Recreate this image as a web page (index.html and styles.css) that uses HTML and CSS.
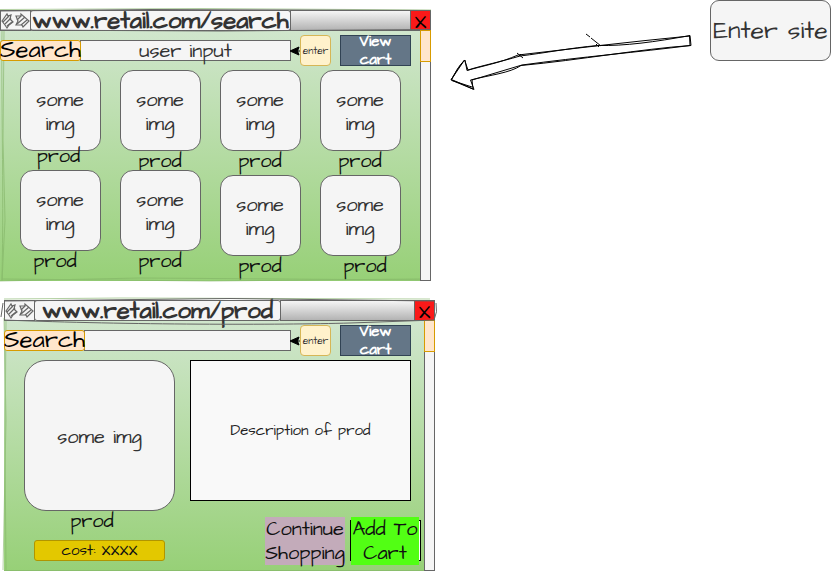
FILE: index.html
```html
<!DOCTYPE html>
<html lang="en">
<head>
<meta charset="utf-8">
<title>Retail wireframe</title>
<link rel="stylesheet" href="styles.css">
</head>
<body>
<main class="canvas">
  <svg width="0" height="0" class="defs">
    <defs>
      <symbol id="nav" viewBox="0 0 30 20">
        <g fill="none" stroke="#666" stroke-width="1.2">
          <path d="M1 10 6 3 7 5 10 4 9 8 12 11 8 14 6 17 4 14ZM15 5 20 5 20 3 28 10 22 16 21 14 15 14 17 10Z"/>
          <path d="M2 11 8 5M4 13 10 7M6 15 11 11M16 9 20 5M16 13 24 6M20 14 26 9"/>
        </g>
      </symbol>
      <symbol id="pointer" viewBox="0 0 10 12">
        <path d="M0 6 9 2 7.500 6 9 10Z" fill="#000" stroke="#000"/><path d="M6 6H10" stroke="#000"/>
      </symbol>
    </defs>
  </svg>

  <section class="window search-window">
    <header class="titlebar">
      <div class="nav"><svg width="30" height="20"><use href="#nav"/></svg></div>
      <div class="url"><span>www.retail.com/search</span></div>
      <div class="track"></div>
      <div class="close">X</div>
    </header>
    <div class="body">
      <div class="content">
        <div class="searchbar">
          <div class="label">Search</div>
          <div class="input">user input</div>
          <svg class="pointer" width="10" height="12"><use href="#pointer"/></svg>
          <div class="enter">enter</div>
          <div class="cart">View<br>cart</div>
        </div>
        <div class="products">
          <div class="product"><div class="thumb">some<br>img</div><div class="name a">prod</div></div>
          <div class="product"><div class="thumb">some<br>img</div><div class="name">prod</div></div>
          <div class="product"><div class="thumb">some<br>img</div><div class="name">prod</div></div>
          <div class="product"><div class="thumb">some<br>img</div><div class="name">prod</div></div>
          <div class="product"><div class="thumb">some<br>img</div><div class="name b">prod</div></div>
          <div class="product"><div class="thumb">some<br>img</div><div class="name">prod</div></div>
          <div class="product low"><div class="thumb">some<br>img</div><div class="name">prod</div></div>
          <div class="product low"><div class="thumb">some<br>img</div><div class="name c">prod</div></div>
        </div>
      </div>
      <div class="scrollbar"><div class="grip"></div></div>
    </div>
  </section>

  <section class="window prod-window">
    <header class="titlebar">
      <div class="nav"><svg width="30" height="20"><use href="#nav"/></svg></div>
      <div class="url"><span>www.retail.com/prod</span></div>
      <div class="track"></div>
      <div class="close">X</div>
    </header>
    <div class="body">
      <div class="content">
        <div class="searchbar">
          <div class="label">Search</div>
          <div class="input"></div>
          <svg class="pointer" width="10" height="12"><use href="#pointer"/></svg>
          <div class="enter">enter</div>
          <div class="cart">View<br>cart</div>
        </div>
        <div class="detail">
          <div class="summary">
            <div class="photo">some img</div>
            <div class="photo-name">prod</div>
            <div class="cost">cost: XXXX</div>
          </div>
          <div class="info">
            <div class="description">Description of prod</div>
            <div class="actions">
              <div class="continue">Continue<br>Shopping</div>
              <div class="add"><span>Add To<br>Cart</span></div>
            </div>
          </div>
        </div>
      </div>
      <div class="scrollbar"><div class="grip"></div></div>
    </div>
  </section>

  <div class="start">Enter site</div>

  <svg class="strokes" width="832" height="571" fill="none">
    <g stroke="#82b366" stroke-width="1" opacity=".6">
      <path d="M2 31C1 100 4 180 2 280M4 31 3 140 5 220 2 281M0 281 140 278 420 280M2 279 210 281 420 279"/>
      <path d="M4 318 6 420 3 570M6 320 5 440 6 570M4 570.500H424M0 9.500 200 8.500 431 10"/>
      <path d="M4 299 120 298 430 299"/>
    </g>
    <g stroke="#666" stroke-width="1">
      <path d="M0 11 150 9.500 430 10.500M0 30 220 31 430 29.500M4 301 230 298.500 434 301M4 320C130 325 280 325 350 323L435 320M436 303Q438 312 434 320M3 303 1 317"/>
    </g>
    <g stroke="#000" stroke-width="1">
      <path d="M690 35.500C655 42 625 46 598 45.500 570 48 545 53 520 56 500 62 484 65 468 70L464.500 60 451 80 474 89.500 470.500 80C490 75 510 73 521 65.500 580 60 640 49 691 45.500L690 35.500"/>
      <path d="M690 36C660 39 630 42 600 45.500L518 55C500 63 482 66 467 70.500L465 60C458 66 455 74 451.500 79.500L473 89 472 80 522 65C580 57 640 52 690 45.500L689.500 36M451 80Q457 69 464 60.500M452 80.500 472 87"/>
      <path d="M586 34 590 37M591 38 601 46M596 44 599 47M517 53 523 58M518 57 521 54"/>
    </g>
  </svg>
</main>
</body>
</html>
```
FILE: styles.css
```css
* { box-sizing: border-box; }
body {
  margin: 0;
  background: #fff;
  font-family: "Architects Daughter", cursive, sans-serif;
  font-size: 20px;
  line-height: 24px;
  color: #333;
}
.canvas { position: relative; width: 832px; height: 571px; overflow: hidden; }
.defs, .strokes { position: absolute; left: 0; top: 0; }
.window {
  position: absolute;
  width: 431px;
  height: 271px;
  display: flex;
  flex-direction: column;
  background: linear-gradient(#d5e8d4, #97d077);
}
.search-window { left: 0; top: 10px; }
.prod-window { left: 4px; top: 300px; }

.titlebar { display: flex; height: 21px; flex: none; }
.nav, .url, .track, .close { border: 1px solid #666; height: 21px; }
.nav { width: 31px; background: #f5f5f5; }
.nav svg { display: block; }
.url {
  width: 261px;
  margin-left: -1px;
  border-radius: 3px;
  background: #f5f5f5;
  display: flex;
  justify-content: center;
  align-items: center;
  font-size: 24px;
  font-weight: bold;
  white-space: nowrap;
  line-height: 19px;
}
.url span { padding-top: 1px; }
.prod-window .url { width: 247px; }
.track { flex: 1; margin-left: -1px; background: linear-gradient(#f5f5f5, #b3b3b3); }
.close {
  width: 21px;
  margin-left: -1px;
  background: #fa1919;
  color: #000;
  text-align: center;
  line-height: 22px;
}

.body { display: flex; flex: 1; }
.content { width: 420px; height: 250px; }
.scrollbar { width: 11px; height: 251px; margin-top: -1px; border: 1px solid #666; background: #f5f5f5; }
.grip { width: 11px; height: 32px; margin: -1px; border: 1px solid #d79b00; background: #ffe6cc; }

.searchbar { display: flex; align-items: center; height: 31px; margin-top: 4px; }
.label {
  z-index: 1;
  width: 81px;
  height: 21px;
  flex: none;
  display: flex;
  justify-content: center;
  border: 1px solid #d79b00;
  border-radius: 3px;
  background: #ffe6cc;
  color: #000;
  font-size: 24px;
  line-height: 19px;
  white-space: nowrap;
}
.input {
  width: 211px;
  height: 21px;
  flex: none;
  margin-left: -1px;
  border: 1px solid #666;
  background: #f5f5f5;
  line-height: 20px;
  text-align: center;
}
.prod-window .input { width: 207px; }
.pointer { flex: none; margin-left: -1px; }
.enter {
  width: 31px;
  height: 31px;
  flex: none;
  border: 1px solid #d6b656;
  border-radius: 4px;
  background: #fff2cc;
  font-size: 10px;
  line-height: 30px;
  text-align: center;
}
.cart {
  width: 71px;
  height: 31px;
  flex: none;
  margin-left: 9px;
  border: 1px solid #314354;
  background: #647687;
  color: #fff;
  font-size: 15px;
  font-weight: bold;
  line-height: 18px;
  text-align: center;
  display: flex;
  align-items: center;
  justify-content: center;
}

.products {
  display: grid;
  grid-template-columns: repeat(4, 81px);
  grid-auto-rows: 100px;
  column-gap: 19px;
  margin: 4px 0 0 20px;
}
.product { width: 81px; height: 81px; }
.low { margin-top: 5px; }
.thumb {
  height: 81px;
  border: 1px solid #666;
  border-radius: 13px;
  background: #f5f5f5;
  display: flex;
  align-items: center;
  justify-content: center;
  text-align: center;
  padding: 3px 1px 0 0;
}
.name { color: #111; text-align: center; margin: -2px 1px 0 0; }
.name.a { margin: -7px 4px 0 0; }
.name.b { margin-right: 11px; }
.name.c { margin-right: -9px; }

.detail { display: flex; margin: 4px 0 0 20px; }
.summary { width: 151px; }
.photo {
  height: 151px;
  border: 1px solid #666;
  border-radius: 22px;
  background: #f5f5f5;
  line-height: 152px;
  text-align: center;
}
.photo-name { margin: -2px 15px 0 0; color: #111; line-height: 24px; text-align: center; }
.cost {
  width: 131px;
  height: 21px;
  margin: 7px 0 0 10px;
  border: 1px solid #b09500;
  border-radius: 3px;
  background: #e3c800;
  color: #111;
  font-size: 15px;
  line-height: 20px;
  text-align: center;
}
.info { margin-left: 15px; width: 231px; }
.description {
  width: 221px;
  height: 141px;
  border: 1px solid #000;
  background: #f9f9f9;
  color: #222;
  font-size: 15px;
  line-height: 139px;
  text-align: center;
}
.actions { display: flex; margin: 16px 0 0 75px; color: #111; text-align: center; }
.continue { width: 80px; height: 48px; background: #c3abba; }
.add {
  width: 71px;
  height: 41px;
  margin: 3px 0 0 5px;
  border: 1px solid #000;
  background: #fff;
}
.add span { display: block; width: 68px; height: 48px; margin-top: -4px; background: #52ff14; white-space: nowrap; }

.start {
  position: absolute;
  left: 710px;
  top: 0;
  width: 121px;
  height: 61px;
  border: 1px solid #666;
  border-radius: 9px;
  background: #f5f5f5;
  font-size: 25px;
  line-height: 60px;
  text-align: center;
  white-space: nowrap;
}
```
